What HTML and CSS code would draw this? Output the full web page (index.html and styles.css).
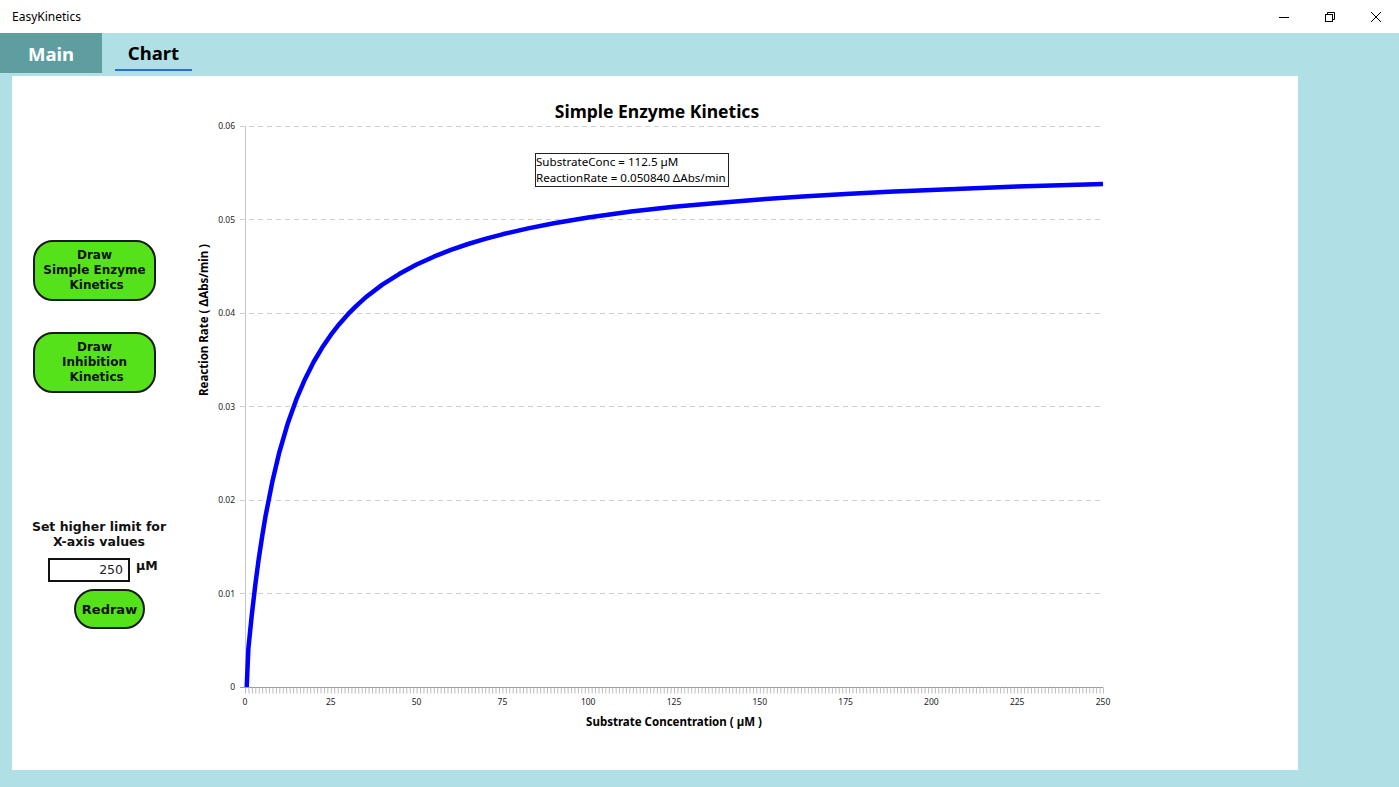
FILE: index.html
```html
<!DOCTYPE html>
<html>
<head>
<meta charset="utf-8">
<title>EasyKinetics</title>
<link rel="stylesheet" href="styles.css">
</head>
<body>
<div class="titlebar">
  <span class="apptitle">EasyKinetics</span>
  <div class="winctrls">
    <span class="wc"><svg width="12" height="12" viewBox="0 0 12 12"><line x1="1" y1="6.5" x2="11" y2="6.5" stroke="#000" stroke-width="1"/></svg></span>
    <span class="wc"><svg width="12" height="12" viewBox="0 0 12 12"><rect x="1.5" y="3.5" width="7" height="7" fill="none" stroke="#000"/><path d="M3.5 3.5 V1.5 H10.5 V8.5 H8.5" fill="none" stroke="#000"/></svg></span>
    <span class="wc"><svg width="12" height="12" viewBox="0 0 12 12"><path d="M1 1 L11 11 M11 1 L1 11" stroke="#000" stroke-width="1"/></svg></span>
  </div>
</div>
<div class="tabs">
  <div class="tab tab-main">Main</div>
  <div class="tab tab-chart">Chart</div>
</div>
<div class="panel">
  <div class="controls">
    <button class="gbtn big first">Draw<br>Simple Enzyme<br>&nbsp;Kinetics</button>
    <button class="gbtn big second">Draw<br>Inhibition<br>&nbsp;Kinetics</button>
    <div class="limitlabel">Set higher limit for<br>X-axis values</div>
    <div class="inputrow">
      <div class="numbox">250</div>
      <span class="unit">µM</span>
    </div>
    <button class="gbtn redraw">Redraw</button>
  </div>
  <div class="chartwrap">
    <svg class="chart" width="1111" height="694" viewBox="187 76 1111 694">
      <text x="657" y="118" class="ctitle" text-anchor="middle">Simple Enzyme Kinetics</text>
      <g class="grid">
        <line x1="240" y1="126.5" x2="1103" y2="126.5"/>
        <line x1="240" y1="219.5" x2="1103" y2="219.5"/>
        <line x1="240" y1="313.5" x2="1103" y2="313.5"/>
        <line x1="240" y1="406.5" x2="1103" y2="406.5"/>
        <line x1="240" y1="500.5" x2="1103" y2="500.5"/>
        <line x1="240" y1="593.5" x2="1103" y2="593.5"/>
      </g>
      <line x1="245.5" y1="126" x2="245.5" y2="687" stroke="#c8c8c8" stroke-width="1"/>
      <line x1="240" y1="687.5" x2="1103" y2="687.5" stroke="#9a9a9a" stroke-width="1"/>
      <line x1="245" y1="690.5" x2="1104" y2="690.5" stroke="#bdbdbd" stroke-width="6" stroke-dasharray="1 2.432"/>
      <g class="ylab" text-anchor="end">
        <text x="235" y="129">0.06</text>
        <text x="235" y="222.5">0.05</text>
        <text x="235" y="316">0.04</text>
        <text x="235" y="409.5">0.03</text>
        <text x="235" y="503">0.02</text>
        <text x="235" y="596.5">0.01</text>
        <text x="235" y="690">0</text>
      </g>
      <g class="xlab" text-anchor="middle">
        <text x="245" y="705">0</text>
        <text x="330.8" y="705">25</text>
        <text x="416.6" y="705">50</text>
        <text x="502.4" y="705">75</text>
        <text x="588.2" y="705">100</text>
        <text x="674" y="705">125</text>
        <text x="759.8" y="705">150</text>
        <text x="845.6" y="705">175</text>
        <text x="931.4" y="705">200</text>
        <text x="1017.2" y="705">225</text>
        <text x="1103" y="705">250</text>
      </g>
      <text x="674" y="726" class="atitle" text-anchor="middle">Substrate Concentration ( µM )</text>
      <text x="0" y="0" class="atitle" text-anchor="middle" transform="translate(208 320) rotate(-90)">Reaction Rate ( ΔAbs/min )</text>
      <polyline class="curve" points="246.7,687 248.4,647.9 251.9,614.1 255.3,584.8 258.7,559.0 262.2,536.1 265.6,515.7 272.5,480.9 279.3,452.3 287.9,422.9 296.5,398.9 305.1,378.9 313.6,362.0 322.2,347.6 330.8,334.9 339.4,323.9 348.0,314.2 356.6,305.6 365.1,297.8 382.3,284.6 399.5,273.8 416.6,264.5 433.8,256.7 450.9,249.9 468.1,244.0 485.2,238.9 502.4,234.3 528.1,228.4 553.9,223.2 588.2,217.5 631.1,211.6 674,206.8 717,202.9 759.8,199.5 802.7,196.6 845.6,194.0 888.5,191.8 931.4,189.9 974.3,188.2 1017.2,186.6 1060.1,185.2 1103,184.0"/>
    </svg>
    <div class="tooltip">SubstrateConc = 112.5 µM<br>ReactionRate = 0.050840 ΔAbs/min</div>
  </div>
</div>
</body>
</html>
```
FILE: styles.css
```css
* { box-sizing: border-box; }
html, body { margin: 0; padding: 0; }
body {
  width: 1399px;
  height: 787px;
  background: #b0e0e6;
  font-family: "Noto Sans", "Open Sans", sans-serif;
  overflow: hidden;
}
.titlebar {
  height: 33px;
  background: #ffffff;
  display: flex;
  align-items: center;
  justify-content: space-between;
}
.apptitle {
  font-size: 12px;
  color: #000;
  margin-left: 12px;
  margin-top: -1px;
}
.winctrls {
  display: flex;
  height: 33px;
}
.wc {
  width: 46px;
  display: flex;
  align-items: center;
  justify-content: center;
}
.wc svg { display: block; }
.tabs {
  height: 43px;
  display: flex;
  align-items: flex-start;
}
.tab {
  height: 40px;
  font-size: 18.5px;
  font-weight: 700;
  display: flex;
  align-items: center;
  justify-content: center;
}
.tab-main {
  width: 102px;
  background: #5f9ea0;
  color: #ffffff;
}
.tab-chart {
  margin-left: 13px;
  width: 77px;
  color: #000;
  border-bottom: 2px solid #2b6fce;
  height: 38px;
  padding-top: 2px;
}
.panel {
  margin-left: 12px;
  width: 1286px;
  height: 694px;
  background: #ffffff;
  display: flex;
}
.controls {
  width: 175px;
  flex: none;
  display: flex;
  flex-direction: column;
  align-items: flex-start;
}
.gbtn {
  font-family: "DejaVu Sans", Verdana, sans-serif;
  font-weight: 700;
  font-size: 12px;
  line-height: 15px;
  color: #111;
  background: #55e21b;
  border: 2px solid #1a1a1a;
  padding: 0;
  text-align: center;
}
.big {
  width: 123px;
  height: 61px;
  border-radius: 20px;
  margin-left: 21px;
}
.first { margin-top: 164px; }
.second { margin-top: 31px; }
.limitlabel {
  margin-top: 126px;
  width: 174px;
  text-align: center;
  font-family: "DejaVu Sans", Verdana, sans-serif;
  font-weight: 700;
  font-size: 12.5px;
  line-height: 15px;
  color: #111;
}
.inputrow {
  margin-top: 9px;
  margin-left: 36px;
  display: flex;
  align-items: flex-start;
}
.numbox {
  width: 82px;
  height: 24px;
  border: 2px solid #111;
  font-family: "DejaVu Sans", Verdana, sans-serif;
  font-size: 12.5px;
  text-align: right;
  padding-right: 5px;
  line-height: 20px;
  color: #222;
}
.unit {
  margin-left: 6px;
  font-family: "DejaVu Sans", Verdana, sans-serif;
  font-weight: 700;
  font-size: 12.5px;
  line-height: 16px;
  color: #111;
}
.redraw {
  margin-top: 7px;
  margin-left: 62px;
  width: 71px;
  height: 40px;
  border-radius: 20px;
  font-size: 13px;
}
.chartwrap {
  position: relative;
  width: 1111px;
  height: 694px;
  flex: none;
}
.chart { display: block; }
.ctitle {
  font-family: "Noto Sans", sans-serif;
  font-weight: 700;
  font-size: 17.5px;
  fill: #000;
}
.grid line {
  stroke: #cfcfcf;
  stroke-width: 1;
  stroke-dasharray: 5 4;
}
.ylab text, .xlab text {
  font-family: "Noto Sans", sans-serif;
  font-size: 8.5px;
  fill: #222;
}
.atitle {
  font-family: "Noto Sans", sans-serif;
  font-weight: 700;
  font-size: 11.5px;
  fill: #000;
}
.curve {
  fill: none;
  stroke: #0000ff;
  stroke-width: 4.5;
  stroke-linejoin: round;
}
.tooltip {
  position: absolute;
  left: 348px;
  top: 77px;
  width: 194px;
  height: 34px;
  background: #fff;
  border: 1px solid #222;
  font-family: "Noto Sans", sans-serif;
  font-size: 11.6px;
  line-height: 16px;
  color: #000;
  padding-left: 0;
  white-space: nowrap;
  overflow: hidden;
}
```
